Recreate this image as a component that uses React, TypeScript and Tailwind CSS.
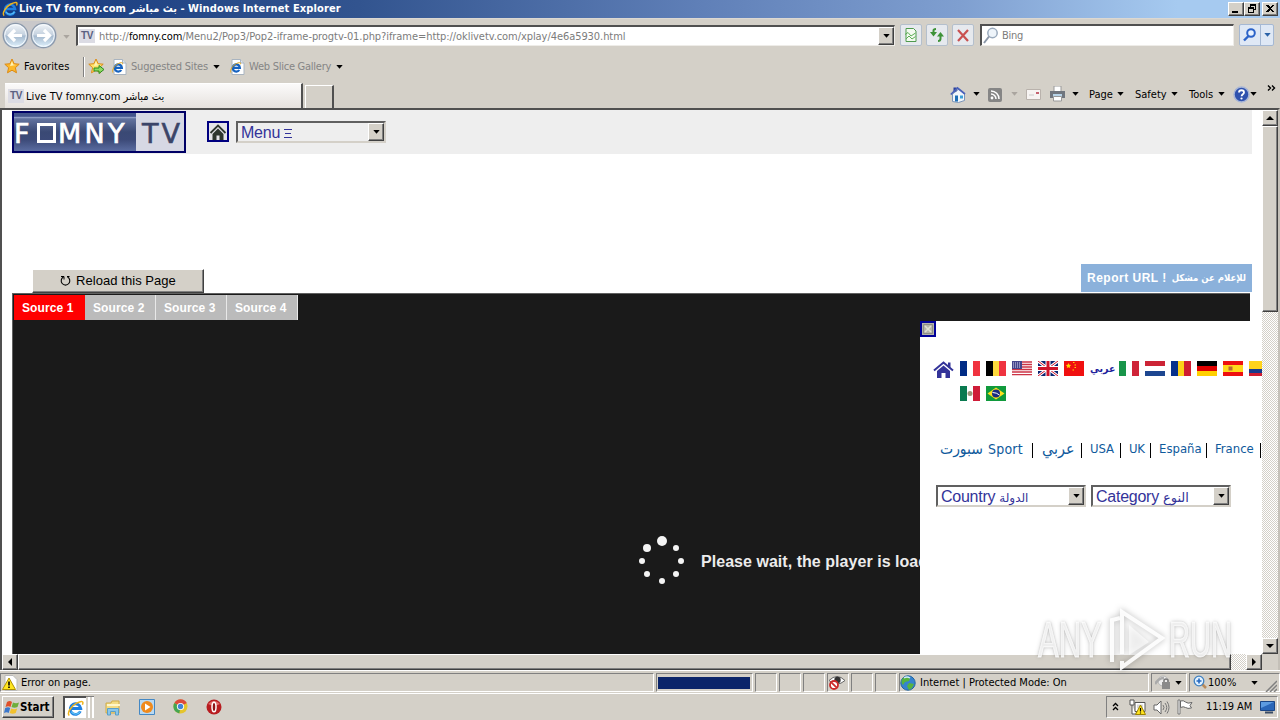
import type { ReactNode } from "react";

const ui = "font-['DejaVu_Sans_Condensed','DejaVu_Sans',sans-serif] [font-stretch:condensed] whitespace-nowrap";
const arial = "font-['Liberation_Sans','DejaVu_Sans',sans-serif] whitespace-nowrap";
const raised =
  "bg-[#d4d0c8] border border-t-white border-l-white border-r-[#404040] border-b-[#404040] shadow-[inset_-1px_-1px_0_#808080]";
const dither =
  "bg-[conic-gradient(#ffffff_25%,#d4d0c8_0_50%,#ffffff_0_75%,#d4d0c8_0)] bg-[length:2px_2px]";

function Caret({ className = "", color = "#000" }: { className?: string; color?: string }) {
  return (
    <svg className={`shrink-0 ${className}`} width="7" height="4" viewBox="0 0 7 4">
      <path d="M0.3 0h6.400L3.500 3.700z" fill={color} />
    </svg>
  );
}

function IeLogo({ size, className = "" }: { size: number; className?: string }) {
  return (
    <svg className={`shrink-0 ${className}`} width={size} height={size} viewBox="0 0 16 16">
      <path d="M12.6 10.6A5 5 0 1 1 13 8H4" fill="none" stroke="#1f7fe0" strokeWidth="2.6" />
      <path d="M12.6 10.6A5 5 0 0 1 4 11" fill="none" stroke="#5cc0f5" strokeWidth="1.2" />
      <path d="M2.2 14.6C-.5 12.5 4 5.500 9 3s7-2 5.500 1.500" fill="none" stroke="#f0b41c" strokeWidth="1.400" />
    </svg>
  );
}

function IePage({ className = "" }: { className?: string }) {
  return (
    <svg className={`shrink-0 ${className}`} width="15" height="16" viewBox="0 0 15 16">
      <path d="M2 .5h8.500l3.500 3.500v11.500H2z" fill="#fff" stroke="#a9b4c0" />
      <path d="M10.500.5V4H14" fill="#dde6ee" stroke="#a9b4c0" />
      <path d="M9.300 11a3.600 3.600 0 1 1 .6-2.200H3" fill="none" stroke="#1763c0" strokeWidth="2.200" />
      <path d="M.8 13.500C-.4 11 3 6 6.500 4.500s5-1 3.500 1" fill="none" stroke="#e5a81c" />
    </svg>
  );
}

function Star({ add = false, className = "" }: { add?: boolean; className?: string }) {
  return (
    <svg className={`shrink-0 ${className}`} width="17" height="17" viewBox="0 0 17 17">
      <path
        d="M8 1l2.100 4.700 5.100.5-3.800 3.500 1.100 5.100L8 12.200l-4.500 2.600 1.100-5.100L.8 6.200l5.100-.5z"
        fill={add ? "#fbe36a" : "#fdb92a"}
        stroke="#dc8a14"
      />
      <path d="M8 3l1.200 3.500 3 .4L6 8z" fill="#fff3b5" />
      {add && <path d="M6 10h5V7.500l5 4-5 4V13H6z" fill="#8edb62" stroke="#2c8a1e" />}
    </svg>
  );
}

function House({ className = "" }: { className?: string }) {
  return (
    <svg className={`shrink-0 ${className}`} width="17" height="17" viewBox="0 0 17 17">
      <path d="M2.500 8v7.500l6 1 6-2V8L9 3z" fill="#f2f6fb" stroke="#7c95b8" />
      <path d="M3.500 1.500h3v4h-3z" fill="#2a3f9a" />
      <path d="M.8 8.500L7.500 2l7.500 6" fill="none" stroke="#4a62ba" strokeWidth="1.700" />
      <path d="M5 9.500h3v6H5z" fill="#1f6fb5" />
      <path d="M10 9.500h3v3h-3z" fill="#3da0d8" />
    </svg>
  );
}

function NavButton({ back = false }: { back?: boolean }) {
  return (
    <svg className="shrink-0" width="27" height="27" viewBox="0 0 27 27">
      <defs>
        <linearGradient id={back ? "nb" : "nf"} x1="0" y1="0" x2="0" y2="1">
          <stop offset="0" stopColor="#f4f7fa" />
          <stop offset=".48" stopColor="#c3d0de" />
          <stop offset=".52" stopColor="#a5b9ce" />
          <stop offset="1" stopColor="#e2f4ff" />
        </linearGradient>
      </defs>
      <circle cx="13.500" cy="13.500" r="12.200" fill={`url(#${back ? "nb" : "nf"})`} stroke="#8a98aa" strokeWidth="1.300" />
      <circle cx="13.500" cy="13.500" r="10.800" fill="none" stroke="#f7fbff" />
      <path
        d={back ? "M20 13.500H8.500M13 8l-5.500 5.500L13 19" : "M7 13.500h11.500M14 8l5.500 5.500L14 19"}
        fill="none"
        stroke="#fff"
        strokeWidth="3.200"
      />
    </svg>
  );
}

function WinButton({ children, className = "" }: { children: ReactNode; className?: string }) {
  return (
    <div className={`${raised} flex h-[14px] w-4 shrink-0 items-center justify-center ${className}`}>
      <svg width="10" height="10" viewBox="0 0 10 10" shapeRendering="crispEdges">
        {children}
      </svg>
    </div>
  );
}

function ToolButton({ children, className = "" }: { children: ReactNode; className?: string }) {
  return (
    <div
      className={`flex h-[22px] w-[22px] shrink-0 items-center justify-center rounded-[2px] border border-[#b4bfcc] bg-[#e6e9ee] ${className}`}
    >
      <svg className="shrink-0" width="16" height="16" viewBox="0 0 16 16">
        {children}
      </svg>
    </div>
  );
}

function DropButton() {
  return (
    <div className={`${raised} flex w-4 shrink-0 items-center justify-center self-stretch`}>
      <Caret />
    </div>
  );
}

function Combo({ children, className }: { children: ReactNode; className: string }) {
  return (
    <div
      className={`${arial} flex h-[22px] shrink-0 items-center border-2 border-t-[#606060] border-l-[#606060] border-r-[#d4d0c8] border-b-[#d4d0c8] pl-[3px] text-base leading-[18px] tracking-[-0.25px] text-[#333399] ${className}`}
    >
      <span className="flex flex-1 items-baseline gap-1 pt-0.5">{children}</span>
      <DropButton />
    </div>
  );
}

function ScrollButton({ d }: { d: string }) {
  return (
    <div className={`${raised} flex h-4 w-4 shrink-0 items-center justify-center`}>
      <svg width="8" height="8" viewBox="0 0 8 8">
        <path d={d} />
      </svg>
    </div>
  );
}

function StatusCell({ children, className }: { children?: ReactNode; className: string }) {
  return (
    <div
      className={`flex h-[19px] shrink-0 items-center border border-t-[#808080] border-l-[#808080] border-r-white border-b-white ${className}`}
    >
      {children}
    </div>
  );
}

function TvBadge({ className = "" }: { className?: string }) {
  return (
    <span
      className={`${arial} flex h-[14px] w-4 shrink-0 items-center justify-center bg-[#dcdce4] text-[10px] font-bold leading-none tracking-[-0.5px] text-[#5a6080] ${className}`}
    >
      TV
    </span>
  );
}

function Flag({ children, w = 20 }: { children: ReactNode; w?: number }) {
  return (
    <svg className="mr-1.5 shrink-0" width={w} height="15" viewBox={`0 0 ${w} 15`}>
      {children}
    </svg>
  );
}

function V({ a, b, c }: { a: string; b: string; c: string }) {
  return (
    <g shapeRendering="crispEdges">
      <path d="M0 0h7v15H0z" fill={a} />
      <path d="M7 0h6v15H7z" fill={b} />
      <path d="M13 0h7v15h-7z" fill={c} />
    </g>
  );
}

function H({ a, b, c }: { a: string; b: string; c: string }) {
  return (
    <g shapeRendering="crispEdges">
      <path d="M0 0h20v5H0z" fill={a} />
      <path d="M0 5h20v5H0z" fill={b} />
      <path d="M0 10h20v5H0z" fill={c} />
    </g>
  );
}

function TitleBar() {
  return (
    <div className="flex h-[18px] shrink-0 items-center bg-[linear-gradient(90deg,#163a80_0%,#32548f_28%,#6080b8_55%,#7f9fd0_75%,#a6caf0_92%)] pl-0.5">
      <IeLogo size={16} />
      <span className={`${ui} ml-px w-[1212px] text-[11px] font-bold leading-[18px] tracking-[0.13px] text-white`}>
        Live TV fomny.com بث مباشر - Windows Internet Explorer
      </span>
      <WinButton className="ml-[-3px]">
        <path d="M1 7h6v2H1z" />
      </WinButton>
      <WinButton>
        <path d="M3 0h6v6H7V5h1V2H4v1H3zM1 3h6v6H1zM2 5v3h4V5z" fillRule="evenodd" />
      </WinButton>
      <WinButton className="ml-0.5">
        <path d="M1 1h2l2 2 2-2h2L6 4.500 9 8H7L5 6 3 8H1l3-3.500z" />
      </WinButton>
    </div>
  );
}

function AddressRow() {
  return (
    <div className="flex h-8 shrink-0 items-start border-t border-[#dcd8d2] pt-1.5">
      <div className="-mt-1 ml-0.5 flex h-7 w-[55px] items-center gap-px rounded-full bg-[#c9c8ca]">
        <NavButton back />
        <NavButton />
      </div>
      <Caret className="ml-[6px] mt-2.5" color="#aaa59f" />
      <div className="ml-1.5 flex h-[21px] w-[819px] items-center border border-t-2 border-l-2 border-[#eeece8] border-t-[#505050] border-l-[#505050] bg-white">
        <TvBadge className="ml-px" />
        <span className={`${ui} ml-[4px] flex-1 pt-px text-[11px] leading-[18px] tracking-[-0.065px] text-[#7c7c7c]`}>
          http://<span className="text-black">fomny.com</span>
          /Menu2/Pop3/Pop2-iframe-progtv-01.php?iframe=http://oklivetv.com/xplay/4e6a5930.html
        </span>
        <DropButton />
      </div>
      <ToolButton className="-mt-px ml-[5px]">
        <path d="M3 1.500h7.500L13 4v10.500H3z" fill="#f3faf0" stroke="#4f9a4e" />
        <path d="M2 7.500l3-2 3 3.500 4.500-3M3 12l3-3 3 3 3.500-2.500" fill="none" stroke="#5cae55" />
      </ToolButton>
      <ToolButton className="-mt-px ml-1">
        <path d="M4.500 6V3.500Q4.500 2 7 2M11.500 9v2.500Q11.500 14 9 14" fill="none" stroke="#3e9238" strokeWidth="2" />
        <path d="M1 5h7L4.500 9.500zM8 9.500h7L11.500 5z" fill="#3e9238" />
      </ToolButton>
      <ToolButton className="-mt-px ml-1">
        <path d="M3 3l10 11M13 3L3 14" stroke="#c95050" strokeWidth="2.200" />
      </ToolButton>
      <div className="-mt-px ml-1.5 flex h-[22px] w-[254px] items-center border border-t-2 border-l-2 border-[#eeece8] border-t-[#505050] border-l-[#505050] bg-white">
        <svg className="ml-px shrink-0" width="16" height="17" viewBox="0 0 16 17">
          <circle cx="9.500" cy="6" r="4.700" fill="#eef4fa" stroke="#9aaabd" strokeWidth="1.500" />
          <path d="M6 9.500L1 16" stroke="#8b97a8" strokeWidth="2" />
        </svg>
        <span className={`${ui} ml-[3px] pt-px text-[11px] leading-[18px] tracking-[-0.3px] text-[#7c7c7c]`}>Bing</span>
      </div>
      <div className="-mt-px ml-[5px] flex h-[22px] w-[35px] items-center rounded-[2px] border border-[#a5b8d3] bg-[#dfe8f5]">
        <svg className="ml-0.5 shrink-0" width="16" height="16" viewBox="0 0 16 16">
          <circle cx="9" cy="6" r="3.800" fill="#e8f2ff" stroke="#2c63c8" strokeWidth="2" />
          <path d="M6.500 9L2 13.500" stroke="#2c63c8" strokeWidth="2.400" />
        </svg>
        <span className="ml-[2px] h-full w-px bg-[#a5b8d3]" />
        <Caret className="ml-[3px]" color="#2c63a8" />
      </div>
    </div>
  );
}

function FavoritesRow() {
  return (
    <div className={`${ui} flex h-[33px] shrink-0 items-center pl-1 text-[11px] text-[#858585]`}>
      <Star />
      <span className="ml-[3px] w-[59px] pt-px tracking-[0.1px] text-black">Favorites</span>
      <span className="h-5 w-0.5 border-l border-[#808080] bg-white" />
      <Star add className="ml-[3px]" />
      <IePage className="ml-[7px]" />
      <span className="ml-1 w-[82px] pt-[2px] tracking-[-0.2px]">Suggested Sites</span>
      <Caret />
      <IePage className="ml-[10px]" />
      <span className="ml-[4px] w-[87px] pt-[2px] tracking-[-0.25px]">Web Slice Gallery</span>
      <Caret />
    </div>
  );
}

function TabRow() {
  return (
    <div className={`${ui} flex h-[25px] shrink-0 items-start text-[11px] text-black`}>
      <div className="ml-[5px] flex h-[25px] w-[298px] items-center border-t border-r-2 border-t-white border-r-[#505050] bg-[linear-gradient(#fbfafa,#e6e2de)] pl-[3px]">
        <TvBadge />
        <span className="ml-0.5 pt-0.5 tracking-[0.06px]">Live TV fomny.com بث مباشر</span>
      </div>
      <div className="ml-0.5 mt-[2px] h-[23px] w-[29px] border border-r-2 border-b-0 border-white border-r-[#505050]" />
      <div className="ml-[616px] flex h-[22px] items-center">
        <House />
        <Caret className="ml-[6px]" />
        <svg className="ml-2 mt-0.5 shrink-0" width="14" height="14" viewBox="0 0 14 14">
          <rect width="14" height="14" rx="2" fill="#858585" />
          <circle cx="4" cy="10" r="1.400" fill="#fff" />
          <path d="M3 6a5 5 0 0 1 5 5M3 3a8 8 0 0 1 8 8" fill="none" stroke="#fff" strokeWidth="1.500" />
        </svg>
        <Caret className="ml-[9px]" color="#aaa59f" />
        <svg className="ml-2 shrink-0" width="15" height="11" viewBox="0 0 15 11">
          <path d="M.5.5h14v10H.5z" fill="#f7f4f2" stroke="#b9b2ac" />
          <path d="M10 3h3v2h-3z" fill="#c56370" />
          <path d="M3 6h5" stroke="#c8c8c8" />
        </svg>
        <svg className="ml-2 shrink-0" width="17" height="16" viewBox="0 0 17 16">
          <path d="M5 0h7v6H5z" fill="#fff" stroke="#999" />
          <path d="M1 5h15v7H1z" fill="#70767e" />
          <path d="M4 8h9v3H4z" fill="#b8d4e8" />
          <path d="M4.500 10.500h8V15h-8z" fill="#fff" stroke="#999" />
        </svg>
        <Caret className="ml-[6px]" />
        <span className="ml-[10px] w-7 pt-0.5">Page</span>
        <Caret />
        <span className="ml-[11px] w-9 pt-0.5">Safety</span>
        <Caret />
        <span className="ml-[11px] w-[29px] pt-0.5">Tools</span>
        <Caret />
        <svg className="ml-2 shrink-0" width="17" height="17" viewBox="0 0 17 17">
          <circle cx="8.500" cy="8.500" r="7.500" fill="#2f52ae" stroke="#a7b5d6" strokeWidth="1.500" />
          <path d="M6 6.500C6 3.500 11 3.500 11 6.500c0 1.800-2.400 1.800-2.400 3.700" fill="none" stroke="#fff" strokeWidth="1.800" />
          <circle cx="8.500" cy="12.500" r="1.100" fill="#fff" />
        </svg>
        <Caret />
        <svg className="mb-3 ml-[10px] shrink-0" width="9" height="6" viewBox="0 0 9 6">
          <path d="M1 0.500l2.500 2.500L1 5.500M5 .5L7.500 3 5 5.500" fill="none" stroke="#000" strokeWidth="1.400" />
        </svg>
      </div>
    </div>
  );
}

function SiteHeader() {
  return (
    <div className="ml-2.5 flex h-11 w-[1240px] shrink-0 items-start bg-[#eeeeee]">
      <div className="mt-px flex h-[42px] w-[174px] whitespace-nowrap border-2 border-[#000066] bg-[linear-gradient(#44558c_0%,#44558c_9%,#8f9cc4_10%,#8f9cc4_13%,#63739f_15%,#3a4974_50%,#3c4a78_70%,#5a6ca0_100%)] font-['DejaVu_Sans',sans-serif] text-[27px] leading-none">
        <span className="flex w-[122px] items-center pt-0.5 text-white [-webkit-text-stroke:0.7px_#ffffff]">
          <span className="w-[23px] shrink-0">F</span>
          <span className="mr-[2px] h-5 w-[19px] shrink-0 border-[3px] border-white" />
          <span className="tracking-[3.2px]">MNY</span>
        </span>
        <span className="flex flex-1 items-center bg-[#d6d8e4] pl-[6px] pt-0.5 tracking-[3px] text-[#3a4468] [-webkit-text-stroke:0.6px_#3a4468]">
          TV
        </span>
      </div>
      <div className="ml-[21px] mt-[11px] flex h-[21px] w-[22px] items-center justify-center border-2 border-[#000080] bg-[#e4e4e8]">
        <svg className="shrink-0" width="18" height="18" viewBox="0 0 18 18">
          <path d="M1.500 10L9 2.500l7.500 7.500" fill="none" stroke="#2e362e" strokeWidth="1.800" />
          <path d="M3.500 11L9 5.500l5.500 5.500V17h-4v-4.500h-3V17h-4z" fill="#2e362e" />
        </svg>
      </div>
      <Combo className="ml-[7px] mt-[11px] w-[150px] bg-[#eeeeee]">
        <span>Menu</span>
        <svg className="self-center" width="8" height="9" viewBox="0 0 8 9" shapeRendering="crispEdges">
          <path d="M0 0h8v1H0zM1 4h6v1H1zM0 8h8v1H0z" fill="#333399" />
        </svg>
      </Combo>
    </div>
  );
}

function Sidebar() {
  return (
    <div className="h-full w-[342px] overflow-hidden bg-white">
      <div className="flex h-4 w-4 items-center justify-center border-2 border-[#000099] bg-[#b4b4aa]">
        <svg className="shrink-0" width="10" height="10" viewBox="0 0 10 10">
          <path d="M2 2l6 6M8 2L2 8" stroke="#e0e0d4" strokeWidth="1.600" />
          <path d="M.5.5h9v9h-9z" fill="none" stroke="#8d8d86" />
        </svg>
      </div>
      <div className="mt-6 flex h-[15px] items-start pl-[13px]">
        <svg className="mr-1.5 shrink-0" width="21" height="18" viewBox="0 0 21 18">
          <path d="M1 9.500L10.500 1.500l9.500 8" fill="none" stroke="#333399" strokeWidth="2" />
          <path d="M15 1.500h2.500v5H15zM4 10l6.500-5.500L17 10v7h-4.500v-5h-4v5H4z" fill="#333399" />
        </svg>
        <Flag><V a="#002b85" b="#fff" c="#f03340" /></Flag>
        <Flag><V a="#000" b="#fdd93c" c="#ef3340" /></Flag>
        <Flag>
          <path d="M0 0h20v15H0z" fill="#fff" />
          <path d="M0 1h20M0 3.500h20M0 6h20M0 8.500h20M0 11h20M0 13.700h20" stroke="#cc3345" strokeWidth="1.300" />
          <path d="M0 0h10v8H0z" fill="#44448c" />
          <path d="M1 2h8M1 4h8M1 6h8" stroke="#d9d9ee" strokeDasharray="1 1" />
        </Flag>
        <Flag>
          <path d="M0 0h20v15H0z" fill="#0a2472" />
          <path d="M0 0l20 15M20 0L0 15" stroke="#fff" strokeWidth="3" />
          <path d="M0 0l20 15M20 0L0 15" stroke="#cf142b" />
          <path d="M10 0v15M0 7.500h20" stroke="#fff" strokeWidth="5" />
          <path d="M10 0v15M0 7.500h20" stroke="#cf142b" strokeWidth="3" />
        </Flag>
        <Flag>
          <path d="M0 0h20v15H0z" fill="#f01010" />
          <path d="M4.500 2l.8 1.700 1.900.2-1.400 1.300.4 1.900-1.700-.9-1.700.9.4-1.900L1.800 3.900l1.900-.2z" fill="#ffd800" />
          <path d="M9 1.500h1.500M10.500 4H12M10.500 6.500H12M8.500 9H10" stroke="#ffd800" strokeWidth="1.200" />
        </Flag>
        <span className="mr-[5px] -mt-[2px] w-6 shrink-0 whitespace-nowrap text-center font-['DejaVu_Sans_Condensed','DejaVu_Sans',sans-serif] text-[10.500px] font-bold leading-[18px] text-[#1f1f9c] [font-stretch:condensed]">
          عربي
        </span>
        <Flag><V a="#18954a" b="#fff" c="#cf2438" /></Flag>
        <Flag><H a="#cc2436" b="#fff" c="#1d4690" /></Flag>
        <Flag><V a="#06308c" b="#fbd018" c="#d01c30" /></Flag>
        <Flag><H a="#000" b="#e00000" c="#ffd000" /></Flag>
        <Flag>
          <path d="M0 0h20v15H0z" fill="#ee1010" />
          <path d="M0 4h20v7H0z" fill="#ffd91c" />
          <path d="M5.500 5.500h4v4h-4z" fill="#b56a35" />
        </Flag>
        <Flag>
          <path d="M0 0h20v8H0z" fill="#ffd31c" />
          <path d="M0 8h20v4H0z" fill="#173a8c" />
          <path d="M0 12h20v3H0z" fill="#cf1c30" />
        </Flag>
      </div>
      <div className="mt-[10px] flex h-[15px] pl-10">
        <Flag>
          <V a="#0a7a50" b="#fff" c="#cf1c38" />
          <circle cx="10" cy="7.500" r="2.500" fill="#9a9478" />
        </Flag>
        <Flag>
          <path d="M0 0h20v15H0z" fill="#109a3c" />
          <path d="M10 1.500l8.500 6-8.500 6-8.500-6z" fill="#ffe01c" />
          <circle cx="10" cy="7.500" r="4" fill="#182a80" />
          <path d="M6.500 6.500q4 0 7 2.500" fill="none" stroke="#fff" />
        </Flag>
      </div>
      <div className="mt-[38px] flex h-5 items-center whitespace-nowrap pl-5 font-['DejaVu_Sans_Condensed','DejaVu_Sans',sans-serif] text-[13px] leading-5 text-[#0f5a9c] [font-stretch:condensed]">
        <span className="flex w-[92px] shrink-0 gap-1 text-[14px]">
          <span className="w-[44px] text-[15.500px]">سبورت</span>
          <span className="tracking-[0.2px]">Sport</span>
        </span>
        <span className="mt-0.5 h-[15px] w-px shrink-0 bg-black" />
        <span className="ml-[9px] w-[39px] shrink-0 text-[16px]">عربي</span>
        <span className="mt-0.5 h-[15px] w-px shrink-0 bg-black" />
        <span className="ml-2 w-[30px] shrink-0 tracking-[-0.1px]">USA</span>
        <span className="mt-0.5 h-[15px] w-px shrink-0 bg-black" />
        <span className="ml-2 w-[21px] shrink-0 tracking-[-0.3px]">UK</span>
        <span className="mt-0.5 h-[15px] w-px shrink-0 bg-black" />
        <span className="ml-2 w-[47px] shrink-0">España</span>
        <span className="mt-0.5 h-[15px] w-px shrink-0 bg-black" />
        <span className="ml-2 w-[45px] shrink-0">France</span>
        <span className="mt-0.5 h-[15px] w-px shrink-0 bg-black" />
      </div>
      <div className="mt-[26px] flex gap-[5px] pl-4">
        <Combo className="w-[150px] bg-white">
          <span>Country</span>
          <span className="text-[12px] tracking-normal">الدولة</span>
        </Combo>
        <Combo className="w-[140px] bg-white">
          <span>Category</span>
          <span className="text-[13px] tracking-normal">النوع</span>
        </Combo>
      </div>
    </div>
  );
}

const dots = [
  [26, 9, 5], [11, 16, 4], [40, 16, 3], [6, 29, 3], [45, 29, 3], [11, 42, 3], [40, 42, 3], [26, 49, 3],
];

function Player() {
  return (
    <>
      <div className="ml-2.5 flex h-7 w-[1238px] shrink-0 items-start border-t border-l border-[#606060] bg-[#1a1a1a] pl-px pt-px">
        <div className={`${arial} flex h-[25px] text-[12px] font-bold leading-[26px] tracking-[0.12px] text-white`}>
          <span className="w-[71px] bg-[#ff0000] pl-2">Source 1</span>
          <span className="w-[71px] border-r border-[#e8e8e8] bg-[#bbbbbb] pl-2">Source 2</span>
          <span className="w-[71px] border-r border-[#e8e8e8] bg-[#bbbbbb] pl-2">Source 3</span>
          <span className="w-[71px] border-r border-[#e8e8e8] bg-[#bbbbbb] pl-2">Source 4</span>
        </div>
      </div>
      <div className="ml-2.5 flex min-h-0 flex-1">
        <div className="w-[908px] overflow-hidden border-l border-[#606060] bg-[#1a1a1a]">
          <div className="ml-[623px] mt-[211px] flex items-center">
            <svg className="shrink-0" width="52" height="58" viewBox="0 0 52 58">
              {dots.map(([x, y, r]) => (
                <circle key={`${x}-${y}`} cx={x} cy={y} r={r} fill="#f4f4f4" />
              ))}
            </svg>
            <span className={`${arial} ml-[13px] mt-0.5 text-base font-bold leading-5 tracking-[0.04px] text-[#ececec]`}>
              Please wait, the player is loading
            </span>
          </div>
        </div>
        <Sidebar />
      </div>
    </>
  );
}

function Page() {
  return (
    <div className="flex h-[544px] w-[1260px] flex-col overflow-hidden bg-white">
      <SiteHeader />
      <div className="mt-[110px] flex h-[29px] shrink-0 items-start pl-[30px]">
        <div
          className={`${arial} ${raised} mt-[5px] flex h-6 w-[172px] items-center justify-center text-[13px] tracking-[0.05px] text-black`}
        >
          <svg className="mr-[5px]" width="11" height="12" viewBox="0 0 11 12">
            <path d="M3.500 2a4.300 4.300 0 1 0 4 0" fill="none" stroke="#000" strokeWidth="1.100" />
            <path d="M1 1.500h3V4.500M9.500 1.500H7" fill="none" stroke="#000" />
          </svg>
          Reload this Page
        </div>
        <div className={`${arial} ml-[877px] flex h-7 w-[171px] items-center justify-between bg-[#8bb1db] px-1.5 text-[12px] font-bold text-white`}>
          <span className="tracking-[0.5px]">Report URL !</span>
          <span dir="rtl" className="font-['DejaVu_Sans_Condensed','DejaVu_Sans',sans-serif] text-[9.500px] [font-stretch:condensed]">
            للإعلام عن مشكل
          </span>
        </div>
      </div>
      <Player />
    </div>
  );
}

function Browser() {
  return (
    <div className="flex h-[562px] shrink-0 flex-col border-t-2 border-l-2 border-r-2 border-[#505050] border-r-[#c4c0b8] bg-[#d4d0c8]">
      <div className="flex h-[544px]">
        <Page />
        <div className={`${dither} flex w-4 flex-col`}>
          <ScrollButton d="M4 2L0 6h8z" />
          <div className={`${raised} h-[186px]`} />
          <div className="flex-1" />
          <ScrollButton d="M0 2h8L4 6z" />
        </div>
      </div>
      <div className="flex h-4">
        <div className={`${dither} flex w-[1260px]`}>
          <ScrollButton d="M6 0L2 4l4 4z" />
          <div className={`${raised} w-[1213px]`} />
          <div className="flex-1" />
          <ScrollButton d="M2 0l4 4-4 4z" />
        </div>
      </div>
    </div>
  );
}

function StatusBar() {
  return (
    <div className={`${ui} flex h-[23px] shrink-0 items-end gap-0.5 border-t border-white pb-px text-[11px] text-black`}>
      <StatusCell className="w-[654px] pl-px">
        <svg width="16" height="16" viewBox="0 0 16 16">
          <path d="M3 .5h8l4 4v11H3z" fill="#fff" stroke="#bbb" />
          <path d="M7 3l6.500 11.500H.5z" fill="#ffe620" stroke="#b09000" />
          <path d="M7 6.500v4M7 11.500V13" stroke="#000" strokeWidth="1.600" />
        </svg>
        <span className="ml-[3px] pt-0.5 tracking-[-0.05px]">Error on page.</span>
      </StatusCell>
      <StatusCell className="w-[97px] pl-px">
        <div className="h-3 w-[92px] bg-[#0a246a]" />
      </StatusCell>
      <StatusCell className="w-[22px]" />
      <StatusCell className="w-[22px]" />
      <StatusCell className="w-[22px]" />
      <StatusCell className="w-[22px]">
        <svg className="shrink-0" width="18" height="17" viewBox="0 0 18 17">
          <path d="M1 6.500q8-8 16 0-8 7-16 0z" fill="#fff" stroke="#666" />
          <circle cx="9.500" cy="6" r="3.200" fill="#333" />
          <circle cx="6" cy="11" r="4" fill="#fff" stroke="#cc2a2a" strokeWidth="1.800" />
          <path d="M3.300 8.300l5.400 5.400" stroke="#cc2a2a" strokeWidth="1.800" />
        </svg>
      </StatusCell>
      <StatusCell className="w-[22px]" />
      <StatusCell className="w-[22px]" />
      <StatusCell className="w-[250px]">
        <svg width="16" height="16" viewBox="0 0 16 16">
          <circle cx="8" cy="8" r="7.200" fill="#3583cf" stroke="#22649e" />
          <path d="M3 3q4-3 7 0l-1 3-4 1-2 3q-3-3 0-7zM9 8l5 1-2 4-3 2-2-4z" fill="#56b33e" />
          <path d="M4 3q3-2 6 0" stroke="#cfeaff" fill="none" strokeWidth="1.500" />
        </svg>
        <span className="ml-1 pt-0.5">Internet | Protected Mode: On</span>
      </StatusCell>
      <StatusCell className="w-[36px] pl-[3px]">
        <svg width="17" height="15" viewBox="0 0 17 15">
          <circle cx="8" cy="6" r="5" fill="#eee" stroke="#b6b6b6" />
          <path d="M0 9q4-6 9-6" stroke="#aaa" strokeWidth="2.500" fill="none" />
          <path d="M7 7h8v7H7z" fill="#8a8a8a" />
          <path d="M9 7V5q2-2 4 0v2" fill="none" stroke="#777" strokeWidth="1.500" />
        </svg>
        <Caret className="ml-[3px]" />
      </StatusCell>
      <StatusCell className="w-[91px] pl-[3px]">
        <svg width="15" height="15" viewBox="0 0 15 15">
          <path d="M9 9l4 4" stroke="#b98a5a" strokeWidth="2.500" />
          <circle cx="6" cy="6" r="4.800" fill="#e2f1ff" stroke="#3f80c0" strokeWidth="1.300" />
          <path d="M6 3.500v5M3.500 6h5" stroke="#2468c0" strokeWidth="1.600" />
        </svg>
        <span className="w-[43px] pt-0.5">100%</span>
        <Caret />
        <svg className="ml-1.5 mt-1.5" width="13" height="13" viewBox="0 0 13 13">
          <path d="M2 13L13 2M6 13l7-7M10 13l3-3" stroke="#808080" strokeWidth="1.500" />
        </svg>
      </StatusCell>
    </div>
  );
}

function Taskbar() {
  return (
    <div className={`${ui} flex h-[27px] shrink-0 items-start border-t border-white bg-[#d4d0c8] pl-0.5 pt-0.5 text-[11px] text-black`}>
      <div className={`${raised} flex h-[22px] w-[52px] items-center pl-px`}>
        <svg className="shrink-0" width="16" height="15" viewBox="0 0 16 15">
          <path d="M3 2q3-2 5 0L6.500 7q-2-1.500-5 0z" fill="#e0502a" />
          <path d="M9 2.500q3 1.500 6 0L13.500 7q-3 1.500-6 0z" fill="#6fae3b" />
          <path d="M1.200 8q3-1.500 5 0L4.700 13q-2-1.500-4.700 0z" fill="#3c78cc" />
          <path d="M7.200 8.500q3 1.500 6 0L11.700 13q-3 1.500-6 0z" fill="#f2c12e" />
        </svg>
        <span className="pt-px text-[11.500px] font-bold">Start</span>
      </div>
      <div className="ml-[9px] flex h-[22px] w-[23px] items-center justify-center border-t-2 border-l-2 border-[#505050] bg-white">
        <IeLogo size={17} />
      </div>
      <div className="flex h-[22px] w-2 justify-between border-t border-[#808080] pl-0.5">
        <span className="h-full w-0.5 bg-white" />
        <span className="h-full w-0.5 bg-white" />
      </div>
      <svg className="ml-[11px] mt-[3px]" width="16" height="17" viewBox="0 0 16 17">
        <path d="M1 4h5l1-2h7v12H1z" fill="#f3dc84" stroke="#cfab48" />
        <path d="M2 6h13" stroke="#fff6c9" strokeWidth="2" />
        <path d="M2.500 16V9.500h11V16h-3v-3.500h-5V16z" fill="#8ac6ea" stroke="#5a9fc8" />
      </svg>
      <svg className="ml-[18px] mt-[3px]" width="16" height="16" viewBox="0 0 16 16">
        <path d="M.5.5h15v15H.5z" fill="#b9d9f2" stroke="#4488c4" />
        <circle cx="8" cy="8" r="6" fill="#f08a1c" />
        <path d="M6 4.500L11.500 8 6 11.500z" fill="#fff" />
      </svg>
      <svg className="ml-[18px] mt-[3px]" width="15" height="15" viewBox="0 0 15 15">
        <circle cx="7.500" cy="7.500" r="7" fill="#e5c52c" />
        <path d="M7.500 7.500L1.300 4a7 7 0 0 1 12.500 0z" fill="#dc4a3c" />
        <path d="M7.500 7.500L1.300 4a7 7 0 0 0 5 10.400z" fill="#45a552" />
        <circle cx="7.500" cy="7.500" r="3.600" fill="#fff" />
        <circle cx="7.500" cy="7.500" r="2.700" fill="#4285d8" />
      </svg>
      <svg className="ml-[18px] mt-[3px]" width="16" height="16" viewBox="0 0 16 16">
        <circle cx="8" cy="8" r="7.500" fill="#b81c20" />
        <path d="M2 5q6-6 12 0-6 3-12 0z" fill="#e36a6a" />
        <ellipse cx="8" cy="8" rx="2" ry="4.800" fill="#901418" stroke="#fff" strokeWidth="1.500" />
      </svg>
      <div className="ml-[884px] flex h-[22px] w-[172px] items-center border border-t-[#808080] border-l-[#808080] border-r-white border-b-white pl-[5px]">
        <svg className="mb-0.5" width="7" height="9" viewBox="0 0 7 9">
          <path d="M1 4l2.500-2.500L6 4M1 8l2.500-2.500L6 8" fill="none" stroke="#000" strokeWidth="1.300" />
        </svg>
        <svg className="ml-2.5" width="17" height="16" viewBox="0 0 17 16">
          <path d="M1 1h4v5H1zM3 6v9h4" fill="#fff" stroke="#555" />
          <path d="M6 3.500h10v9H6z" fill="#fff" stroke="#555" />
          <path d="M8 5.500h6v4H8z" fill="#d8d8d8" />
          <path d="M11.500 6l5 9.500h-10z" fill="#ffe21c" stroke="#9c8200" />
          <path d="M11.500 9v3.500M11.500 13.500v1" stroke="#000" strokeWidth="1.200" />
        </svg>
        <svg className="ml-[7px]" width="17" height="15" viewBox="0 0 17 15">
          <path d="M1 5h3l4-4v13l-4-4H1z" fill="#fff" stroke="#666" />
          <path d="M10 5q2 2.500 0 5M12 3q3.500 4.500 0 9M14 1.500q4 6 0 12" fill="none" stroke="#777" />
        </svg>
        <svg className="ml-[7px]" width="16" height="16" viewBox="0 0 16 16">
          <path d="M1 1h2v14H1z" fill="#fff" stroke="#777" />
          <path d="M3.500 2q3-1 5 1t6.500.500l-2 3 1.500 2.500q-4 1-6-.5t-5 0z" fill="#fff" stroke="#666" />
        </svg>
        <span className="ml-[13px] w-[54px] pt-px tracking-[-0.1px]">11:19 AM</span>
        <svg width="16" height="14" viewBox="0 0 16 14">
          <path d="M.5 1.500h14v9H.5z" fill="#2a66b8" stroke="#1a4585" />
          <path d="M1 2h13L1 8z" fill="#5d9be0" />
          <path d="M5 12.500h8" stroke="#3a4c66" strokeWidth="2" />
        </svg>
      </div>
    </div>
  );
}

function Watermark() {
  return (
    <div
      className={`${arial} pointer-events-none absolute left-[1038px] top-[608px] flex h-16 w-[196px] items-center text-[50px] leading-none text-white/80 [text-shadow:0_0_3px_rgba(0,0,0,0.28),0_0_7px_rgba(0,0,0,0.2)]`}
    >
      <span className="w-[66px]">
        <span className="inline-block origin-left scale-x-[0.62] [-webkit-text-stroke:1px_rgba(255,255,255,0.8)]">ANY</span>
      </span>
      <svg
        className="shrink-0 overflow-visible drop-shadow-[0_0_3px_rgba(0,0,0,0.3)]"
        width="62"
        height="64"
        viewBox="0 0 62 64"
      >
        <path d="M25 17v30l20-13z" fill="#fff" fillOpacity=".6" />
        <path
          d="M8 54V12l8-2M18 46V4l40 26-40 29v-6"
          fill="none"
          stroke="#fff"
          strokeOpacity=".9"
          strokeWidth="4"
        />
      </svg>
      <span className="ml-[3px] w-[64px]">
        <span className="inline-block origin-left scale-x-[0.58] [-webkit-text-stroke:1px_rgba(255,255,255,0.8)]">RUN</span>
      </span>
    </div>
  );
}

export default function App() {
  return (
    <div className="relative flex h-[720px] w-[1280px] flex-col overflow-hidden bg-[#d4d0c8]">
      <TitleBar />
      <AddressRow />
      <FavoritesRow />
      <TabRow />
      <Browser />
      <StatusBar />
      <Taskbar />
      <Watermark />
    </div>
  );
}
